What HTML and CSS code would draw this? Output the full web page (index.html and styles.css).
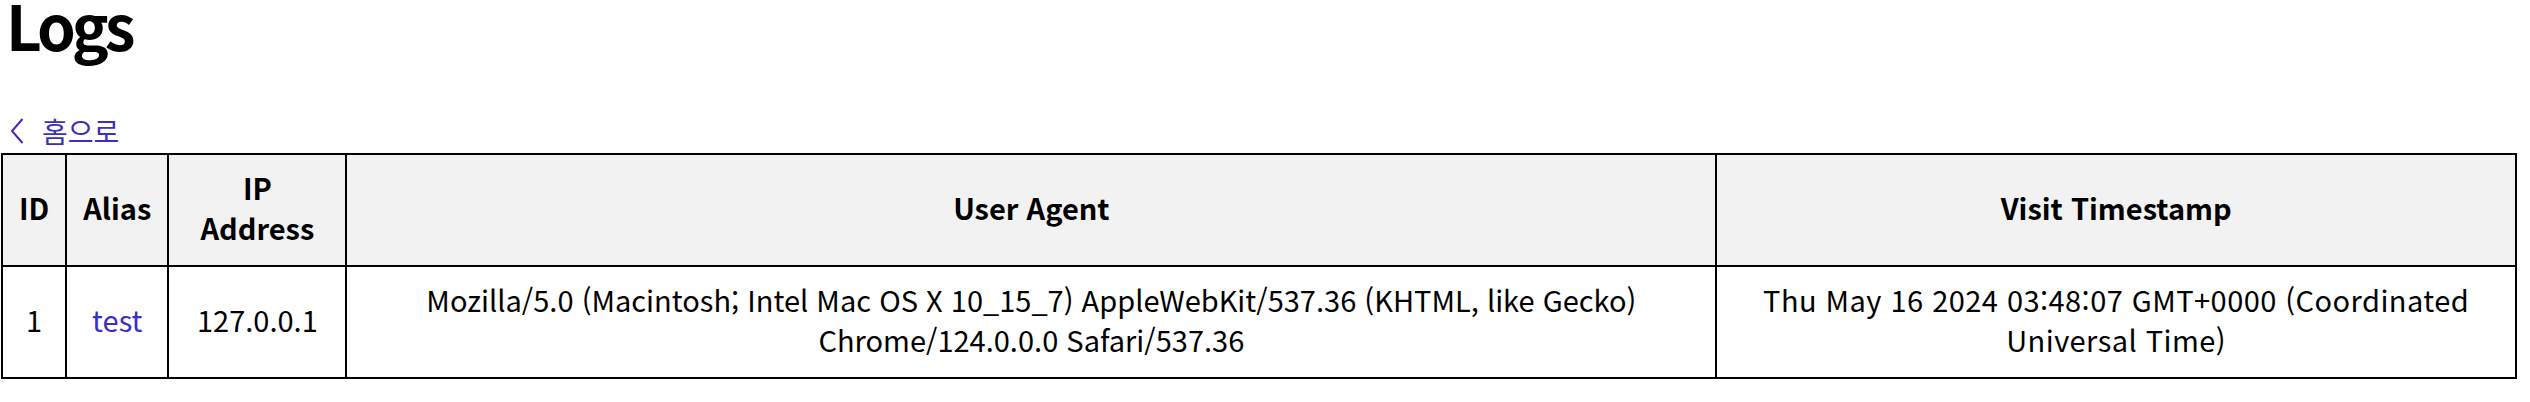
FILE: index.html
```html
<!DOCTYPE html>
<html lang="ko">
<head>
<meta charset="utf-8">
<title>Logs</title>
<link rel="stylesheet" href="styles.css">
</head>
<body>
<main class="page">
  <h1 class="title">Logs</h1>
  <a class="back" href="#"><svg class="chev" viewBox="0 0 16 28" width="16" height="28"><path d="M13.5 2 L3 14 L13.5 26" fill="none" stroke="currentColor" stroke-width="2"/></svg><span class="back-text">홈으로</span></a>
  <table class="logs">
    <thead>
      <tr>
        <th>ID</th>
        <th>Alias</th>
        <th>IP Address</th>
        <th>User Agent</th>
        <th>Visit Timestamp</th>
      </tr>
    </thead>
    <tbody>
      <tr>
        <td>1</td>
        <td><a class="alias" href="#">test</a></td>
        <td>127.0.0.1</td>
        <td>Mozilla/5.0 (Macintosh; Intel Mac OS X 10_15_7) AppleWebKit/537.36 (KHTML, like Gecko) Chrome/124.0.0.0 Safari/537.36</td>
        <td class="stamp">Thu May 16 2024 03:48:07 GMT+0000 (Coordinated Universal Time)</td>
      </tr>
    </tbody>
  </table>
</main>
</body>
</html>
```
FILE: styles.css
```css
html, body {
  margin: 0;
  padding: 0;
  background: #ffffff;
}
body {
  font-family: "Noto Sans CJK KR", "Noto Sans", sans-serif;
  font-size: 29px;
  color: #000;
}
.page {
  width: 2516px;
  padding-left: 1px;
}
.title {
  font-size: 62px;
  font-weight: 700;
  letter-spacing: -4px;
  line-height: 48px;
  margin: 0;
  padding: 0 0 0 5px;
}
.back {
  display: flex;
  width: max-content;
  align-items: center;
  gap: 17px;
  margin: 67px 0 6px 8px;
  color: #3a2fc0;
  text-decoration: none;
  font-size: 28px;
  line-height: 32px;
}
.chev {
  display: block;
}
.logs {
  border-collapse: collapse;
  width: 100%;
}
.logs th, .logs td {
  border: 2px solid #000;
  padding: 12px 16px 18px;
  line-height: 40px;
  text-align: center;
  vertical-align: middle;
}
.logs th {
  background: #f2f2f2;
  font-weight: 700;
}
.logs .stamp {
  letter-spacing: 0.45px;
}
.alias {
  color: #3a2fc0;
  text-decoration: none;
}
```
